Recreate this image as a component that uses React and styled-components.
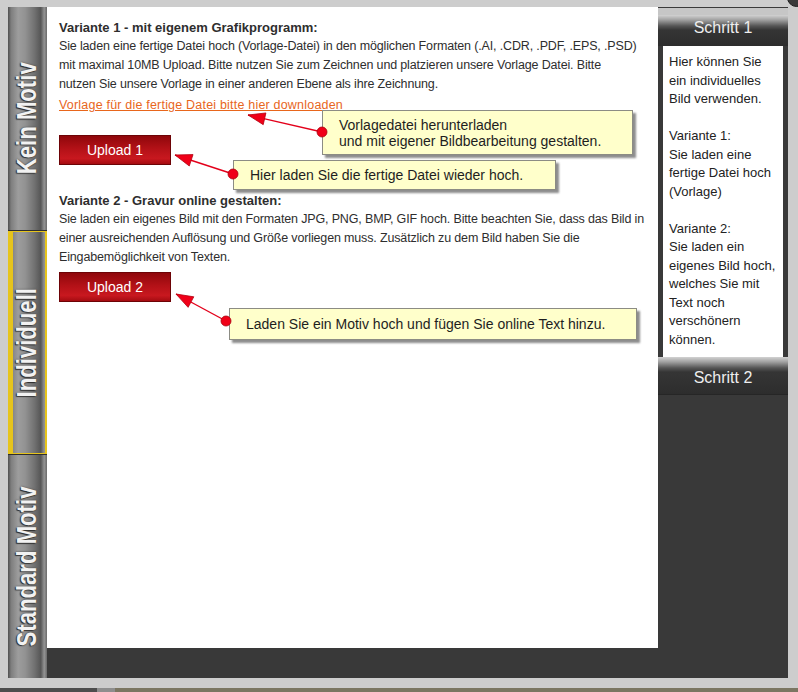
import styled, { createGlobalStyle } from 'styled-components';

const GlobalStyle = createGlobalStyle`
  html, body {
    margin: 0;
    padding: 0;
    background: #cdcdcd;
  }
  body {
    font-family: "Liberation Sans", Arial, sans-serif;
  }
`;

const tabs = [
  { id: 'kein', label: 'Kein Motiv' },
  { id: 'individuell', label: 'Individuell', active: true },
  { id: 'standard', label: 'Standard Motiv' },
];

const variante1 = [
  'Sie laden eine fertige Datei hoch (Vorlage-Datei) in den möglichen Formaten (.AI, .CDR, .PDF, .EPS, .PSD)',
  'mit maximal 10MB Upload. Bitte nutzen Sie zum Zeichnen und platzieren unsere Vorlage Datei. Bitte',
  'nutzen Sie unsere Vorlage in einer anderen Ebene als ihre Zeichnung.',
];

const variante2 = [
  'Sie laden ein eigenes Bild mit den Formaten JPG, PNG, BMP, GIF hoch. Bitte beachten Sie, dass das Bild in',
  'einer ausreichenden Auflösung und Größe vorliegen muss. Zusätzlich zu dem Bild haben Sie die',
  'Eingabemöglichkeit von Texten.',
];

// hint boxes over the sheet, coordinates relative to the white sheet
const callouts = [
  {
    id: 'vorlage',
    left: 275, top: 103, width: 311, height: 45,
    dot: [275, 125], tip: [201, 108],
    lines: ['Vorlagedatei herunterladen', 'und mit eigener Bildbearbeitung gestalten.'],
  },
  {
    id: 'upload1',
    left: 186, top: 153, width: 323, height: 30,
    dot: [186, 167], tip: [128, 148],
    lines: ['Hier laden Sie die fertige Datei wieder hoch.'],
  },
  {
    id: 'upload2',
    left: 182, top: 301, width: 408, height: 32,
    dot: [179, 314], tip: [129, 287],
    lines: ['Laden Sie ein Motiv hoch und fügen Sie online Text hinzu.'],
  },
];

function arrowHead([tx, ty], [fx, fy], len = 17, half = 6) {
  const dx = fx - tx;
  const dy = fy - ty;
  const d = Math.hypot(dx, dy);
  const ux = dx / d;
  const uy = dy / d;
  const bx = tx + ux * len;
  const by = ty + uy * len;
  return `${tx},${ty} ${bx - uy * half},${by + ux * half} ${bx + uy * half},${by - ux * half}`;
}

function Lines({ lines }) {
  return lines.map((line, i) => (
    <span key={i}>
      {line}
      {i < lines.length - 1 && <br />}
    </span>
  ));
}

export default function App() {
  return (
    <Page>
      <GlobalStyle />
      <CloseKnob />
      <Frame>
        <TabColumn>
          {tabs.map((tab) => (
            <Tab key={tab.id} $active={tab.active}>
              <TabLabel>{tab.label}</TabLabel>
            </Tab>
          ))}
        </TabColumn>

        <Main>
          <Sheet>
            <Heading>Variante 1 - mit eigenem Grafikprogramm:</Heading>
            <Body>
              <Lines lines={variante1} />
            </Body>
            <DownloadLink href="#">Vorlage für die fertige Datei bitte hier downloaden</DownloadLink>
            <UploadButton $mt={20}>Upload 1</UploadButton>

            <Heading $mt={26}>Variante 2 - Gravur online gestalten:</Heading>
            <Body>
              <Lines lines={variante2} />
            </Body>
            <UploadButton $mt={5}>Upload 2</UploadButton>

            {callouts.map((c) => (
              <Callout
                key={c.id}
                style={{ left: c.left, top: c.top, width: c.width, height: c.height }}
              >
                {c.lines.map((line) => (
                  <div key={line}>{line}</div>
                ))}
              </Callout>
            ))}

            <Pointers width="611" height="641">
              {callouts.map((c) => (
                <g key={c.id}>
                  <line
                    x1={c.dot[0]} y1={c.dot[1]}
                    x2={c.tip[0]} y2={c.tip[1]}
                    stroke="#e3001b" strokeWidth="1.4"
                  />
                  <polygon points={arrowHead(c.tip, c.dot)} fill="#f00018" stroke="#b3000f" strokeWidth="0.8" />
                  <circle cx={c.dot[0]} cy={c.dot[1]} r="5" fill="#f00018" stroke="#a8000e" strokeWidth="0.8" />
                </g>
              ))}
            </Pointers>
          </Sheet>
        </Main>

        <Side>
          <SideTop />
          <StepHeader $h={31} $pb={5}>Schritt 1</StepHeader>
          <InfoBox>
            Hier können Sie ein individuelles Bild verwenden.
            <br />
            <br />
            Variante 1:
            <br />
            Sie laden eine fertige Datei hoch (Vorlage)
            <br />
            <br />
            Variante 2:
            <br />
            Sie laden ein eigenes Bild hoch, welches Sie mit Text noch verschönern können.
          </InfoBox>
          <StepHeader $h={38} $pt={4} $line>Schritt 2</StepHeader>
        </Side>
      </Frame>

      <Taskbar>
        <TaskSegment $w={97} $bg="#4d4d4d" />
        <TaskSegment $w={18} $bg="#8e8e8e" />
        <TaskSegment $bg="#7b7662" />
      </Taskbar>
    </Page>
  );
}

const Page = styled.div`
  position: relative;
  width: 798px;
  height: 692px;
  display: flex;
  flex-direction: column;
  background: #cdcdcd;
  overflow: hidden;
`;

const CloseKnob = styled.div`
  position: absolute;
  top: -12px;
  right: -8px;
  width: 17px;
  height: 17px;
  border-radius: 50%;
  background: #3a3a3a;
  border: 1px solid #1e1e1e;
`;

const Frame = styled.div`
  margin: 7px 10px 0 8px;
  height: 671px;
  display: grid;
  grid-template-columns: 39px 611px 130px;
  background: #393939;
`;

const TabColumn = styled.nav`
  display: flex;
  flex-direction: column;
  gap: 1px;
  background: #2e2e2e;
`;

const Tab = styled.div`
  flex: 1;
  display: flex;
  align-items: center;
  justify-content: center;
  background: linear-gradient(
    to right,
    #505050 0%,
    #7e7e7e 8%,
    #9d9d9d 26%,
    #929292 44%,
    #717171 68%,
    #565656 84%,
    #939393 93%,
    #6a6a6a 100%
  );
  box-shadow: ${(p) =>
    p.$active
      ? 'inset 5px 0 0 #e6c41c, inset -2px 0 0 #e6c41c, inset 0 1px 0 #e6c41c, inset 0 -1px 0 #e6c41c'
      : 'none'};
`;

const TabLabel = styled.span`
  writing-mode: vertical-rl;
  transform: rotate(180deg) scale(1, 0.82);
  font: bold 27px "Liberation Sans", Arial, sans-serif;
  color: #f2f2f2;
  text-shadow: -1px -1px 1px #2c2c2c, 0 0 2px #3a3a3a;
  white-space: nowrap;
`;

const Main = styled.main`
  display: flex;
  flex-direction: column;
`;

const Sheet = styled.section`
  position: relative;
  height: 641px;
  box-sizing: border-box;
  padding: 11px 4px 0 12px;
  background: #ffffff;
  color: #2e2e2e;
`;

const Heading = styled.h3`
  margin: ${(p) => p.$mt || 0}px 0 0;
  font: bold 13px/19px "Liberation Sans", Arial, sans-serif;
`;

const Body = styled.p`
  margin: 0;
  font-size: 12.5px;
  line-height: 19px;
  letter-spacing: -0.15px;
  white-space: nowrap;
`;

const DownloadLink = styled.a`
  display: inline-block;
  margin-top: 2px;
  font-size: 12.5px;
  line-height: 19px;
  letter-spacing: 0.2px;
  color: #e8661c;
  text-decoration: underline;
`;

const UploadButton = styled.button`
  display: block;
  margin-top: ${(p) => p.$mt}px;
  width: 112px;
  height: 30px;
  padding: 0;
  border: 1px solid #6d0306;
  background: linear-gradient(#8f070b 0%, #b31117 45%, #c8181f 80%, #a50c11 100%);
  color: #ffffff;
  font: 14px "Liberation Sans", Arial, sans-serif;
  cursor: pointer;
`;

const Callout = styled.div`
  position: absolute;
  box-sizing: border-box;
  display: flex;
  flex-direction: column;
  justify-content: center;
  padding: 0 10px 0 16px;
  background: #ffffcb;
  border: 1px solid #8c8c84;
  box-shadow: 3px 3px 2px #8d8d8d;
  color: #1e1e1e;
  font: 14px/16px "Liberation Sans", Arial, sans-serif;
  white-space: nowrap;
`;

const Pointers = styled.svg`
  position: absolute;
  left: 0;
  top: 0;
  pointer-events: none;
  overflow: visible;
`;

const Side = styled.aside`
  display: flex;
  flex-direction: column;
  background: #393939;
`;

const SideTop = styled.div`
  height: 7px;
  background: #c6c6c6;
  border-top: 1px solid #3a3a3a;
`;

const StepHeader = styled.div`
  height: ${(p) => p.$h}px;
  box-sizing: border-box;
  padding: ${(p) => p.$pt || 0}px 0 ${(p) => p.$pb || 0}px;
  display: flex;
  align-items: center;
  justify-content: center;
  background: linear-gradient(
    to bottom,
    #d2d2d2 0px,
    #a0a0a0 5px,
    #555555 11px,
    #353535 15px,
    #2d2d2d 100%
  );
  border-bottom: ${(p) => (p.$line ? '1px solid #262626' : 'none')};
  color: #eeeeee;
  font: 16px "Liberation Sans", Arial, sans-serif;
`;

const InfoBox = styled.div`
  margin: 0 5px;
  height: 311px;
  box-sizing: border-box;
  padding: 7px 4px 0 6px;
  background: #ffffff;
  color: #222222;
  font: 13px/18.5px "Liberation Sans", Arial, sans-serif;
`;

const Taskbar = styled.div`
  margin-top: auto;
  height: 4px;
  display: flex;
`;

const TaskSegment = styled.div`
  flex: ${(p) => (p.$w ? `0 0 ${p.$w}px` : 1)};
  background: ${(p) => p.$bg};
`;
